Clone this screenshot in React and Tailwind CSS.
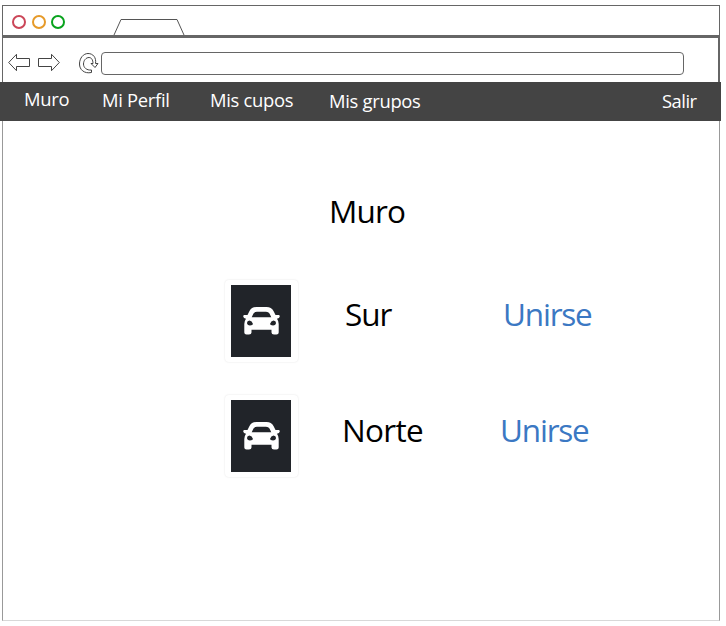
function Arrow() {
  return (
    <svg className="block" width="22" height="19" viewBox="0 0 22 19" fill="none" stroke="#444" strokeWidth="1">
      <path d="M.7 9.500 8.500 1.300V5.500H21.500V13.500H8.500V17.700Z" />
    </svg>
  );
}

function Reload() {
  return (
    <svg className="block" width="22" height="22" viewBox="0 0 22 22" fill="none" stroke="#444" strokeWidth="1">
      <path d="M13.500 20.500C6 22 1.500 17.500 1.500 12C1.500 6 5.500 1.500 10 1.500C15 1.500 18.500 5.500 17.500 11.500H20L17 15.500L13 11.500H15C15 8 13.500 5.500 11 5.500C8 5.500 5.500 8.500 5.500 12C5.500 15.500 8.500 18.500 13.500 18Z" />
    </svg>
  );
}

function Car() {
  return (
    <svg className="block" width="37" height="28" viewBox="0 0 37 28" fill="#fff">
      <path
        fillRule="evenodd"
        d="M13.500 0H23.500Q28.500 0 30.500 4L32.500 8H35.500Q37 8 36.700 9.800Q36.500 11.500 34 11.700Q35.700 14 35.700 17V25.500Q35.700 27.500 33.500 27.500H31Q28.500 27.500 28.500 25.500V22.700H8.500V25.500Q8.500 27.500 6 27.500H3.500Q1.300 27.500 1.300 25.500V17Q1.300 14 3 11.700Q.5 11.500 .3 9.800Q0 8 1.500 8H4.500L6.500 4Q8.500 0 13.500 0ZM14 4.800Q11.500 4.800 10.500 6.500L8.700 10.300H28.300L26.500 6.500Q25.500 4.800 23 4.800ZM6.500 13.600Q4 14.100 4 16Q4.200 18.400 7 18.400Q9.800 18.200 10 17Q9 14 6.500 13.600ZM30.500 13.600Q28 14 27 17Q27.200 18.200 30 18.400Q32.800 18.400 33 16Q33 14.100 30.500 13.600Z"
      />
    </svg>
  );
}

function CarCard() {
  return (
    <div className="flex h-[82px] w-[73px] rounded-sm bg-white pl-[6px] pt-[5px] shadow-[0_0_2px_rgba(0,0,0,0.12)]">
      <div className="-mt-[0.5px] flex h-[72px] w-[60px] items-center justify-center bg-[#212429]">
        <Car />
      </div>
    </div>
  );
}

export default function App() {
  return (
    <div className="h-[626px] w-[726px] overflow-hidden bg-white pt-[5px] font-['Open_Sans',sans-serif]">
      <header className="ml-[2px] h-[77px] w-[718px] border-x border-t border-[#666]">
        <div className="flex h-[32px] items-end border-b-[3px] border-[#666]">
          <div className="mb-[6px] ml-[9px] flex gap-[6px]">
            <span className="size-[14px] rounded-full border-2 border-[#cb4658]" />
            <span className="size-[14px] rounded-full border-2 border-[#e69a29]" />
            <span className="-ml-px size-[14px] rounded-full border-2 border-[#08a31d]" />
          </div>
          <svg className="ml-[48px] block" width="72" height="17" viewBox="0 0 72 17" fill="none" stroke="#555">
            <path d="M1 17 8 1.500H64L71 17" />
          </svg>
        </div>
        <div className="flex h-[44px] items-start border-r border-[#666] pt-[14px]">
          <div className="ml-[5px] pt-px"><Arrow /></div>
          <div className="ml-[8px] rotate-180 pb-px"><Arrow /></div>
          <div className="ml-[18px]"><Reload /></div>
          <div className="ml-px h-[23px] w-[583px] rounded border border-[#666] bg-white" />
        </div>
      </header>
      <nav className="flex h-[39px] w-[721px] items-start bg-[#444] pt-[4px] text-[18.4px] leading-[26px] tracking-[-0.3px] text-white">
        <a className="ml-[24px] w-[78px]">Muro</a>
        <a className="w-[108px] pt-px">Mi Perfil</a>
        <a className="w-[119px] pt-px">Mis cupos</a>
        <a className="w-[333px] pt-[2px]">Mis grupos</a>
        <a className="pt-[2px] tracking-[-0.5px]">Salir</a>
      </nav>
      <main className="ml-[2px] h-[500px] w-[718px] border-x border-b border-x-[#999] border-b-[#d8d8d8] pt-[70px] text-[31.5px] leading-[40px] text-black">
        <h1 className="ml-[326px] tracking-[-0.8px]">Muro</h1>
        <div className="mt-[49px] flex">
          <div className="ml-[222px] w-[120px]"><CarCard /></div>
          <span className="w-[158px] pt-[14px] tracking-[-1.1px]">Sur</span>
          <a className="pt-[14px] tracking-[-1.2px] text-[#3b78c3]">Unirse</a>
        </div>
        <div className="mt-[33px] flex">
          <div className="ml-[222px] w-[117px]"><CarCard /></div>
          <span className="w-[158px] pt-[15px] tracking-[-0.7px]">Norte</span>
          <a className="pt-[15px] tracking-[-1.2px] text-[#3b78c3]">Unirse</a>
        </div>
      </main>
    </div>
  );
}
